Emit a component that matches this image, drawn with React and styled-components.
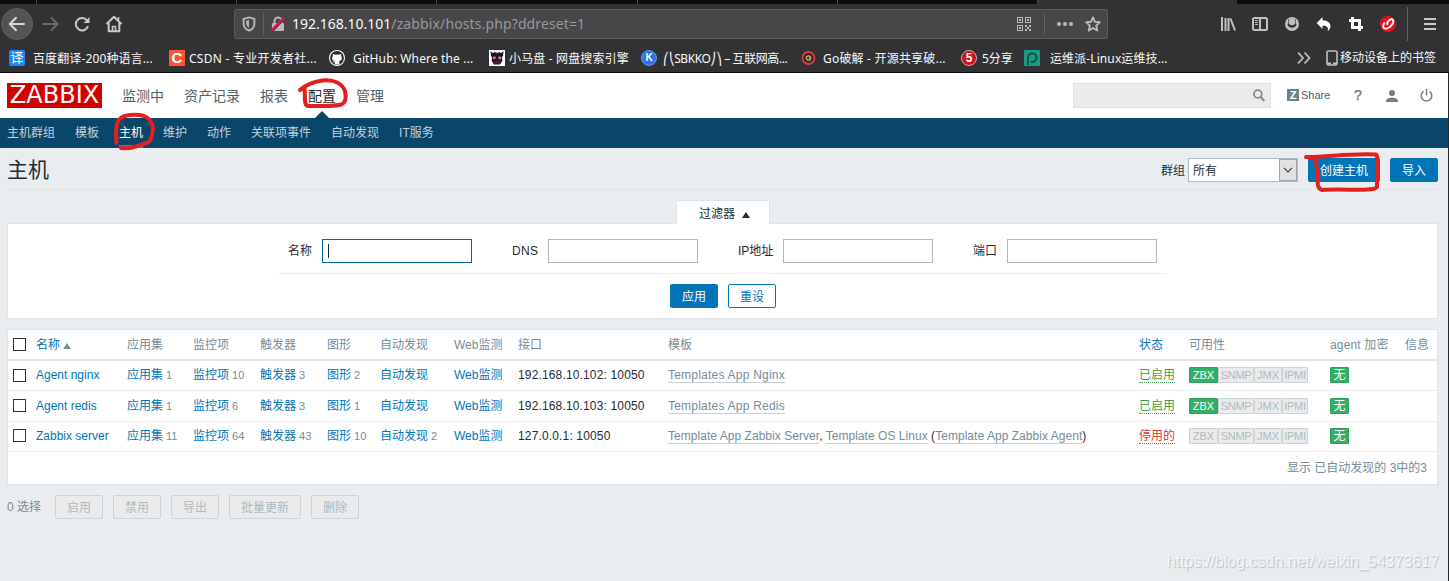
import React from 'react'
import styled, { createGlobalStyle } from 'styled-components';

const GlobalStyle = createGlobalStyle`
  * {
    box-sizing: border-box;
  }

  body {
    margin: 0;
    background: #e9edf0;
    overflow: hidden;
  }
`;

const bookmarks = [
  { icon: 'fanyi', text: '百度翻译-200种语言...', width: 160, gap: 8, ls: 0.12 },
  { icon: 'csdn', text: 'CSDN - 专业开发者社...', width: 160, gap: 4, ls: 0.26 },
  { icon: 'github', text: 'GitHub: Where the ...', width: 160, gap: 8, ls: 0.14 },
  { icon: 'horse', text: '小马盘 - 网盘搜索引擎', width: 152, gap: 4, ls: 0.15 },
  { icon: 'k', text: '⎛⎝SBKKO⎠⎞ – 互联网高...', width: 160, gap: 6, ls: -0.42 },
  { icon: 'go', text: 'Go破解 - 开源共享破...', width: 160, gap: 7, ls: 0.2 },
  { icon: 'five', text: '5分享', width: 63, gap: 5 },
  { icon: 'yunwei', text: '运维派-Linux运维技...', width: 150, gap: 10, ls: 0.1 },
];

const hosts = [
  {
    name: 'Agent nginx', apps: 1, items: 10, triggers: 3, graphs: 2,
    ip: '192.168.10.102: 10050', enabled: true, ls: 0.22,
    template: <Tpl>Templates App Nginx</Tpl>,
  },
  {
    name: 'Agent redis', apps: 1, items: 6, triggers: 3, graphs: 1,
    ip: '192.168.10.103: 10050', enabled: true, ls: 0.22,
    template: <Tpl>Templates App Redis</Tpl>,
  },
  {
    name: 'Zabbix server', apps: 11, items: 64, triggers: 43, graphs: 10, discovery: 2,
    ip: '127.0.0.1: 10050', enabled: false, ls: 0.04,
    template: (
      <>
        <Tpl>Template App Zabbix Server</Tpl>, <Tpl>Template OS Linux</Tpl> (<Tpl>Template App Zabbix Agent</Tpl>)
      </>
    ),
  },
];

function Tpl({ children }) {
  return <TemplateLink>{children}</TemplateLink>
}

const BookmarkIcon = ({ name }) => {
  switch (name) {
    case 'fanyi':
      return <Favicon $bg="#1e88f5" $size="13px" $radius="2px">译</Favicon>
    case 'csdn':
      return <Favicon $bg="#fc5531" $size="15px" $bold>C</Favicon>
    case 'github':
      return (
        <svg width="16" height="16" viewBox="0 0 16 16">
          <circle cx="8" cy="8" r="8" fill="#fff" />
          <circle cx="8" cy="8" r="6.9" fill="#24292e" />
          <path fill="#fff" d="M5.9 14.6v-2.2c-1.5.3-2-.6-2.3-1.2l-.4-.4c1-.1 1.2.9 2 .9.4 0 .7-.1.9-.6-2-.3-3-1.300-3-3.200 0-.8.3-1.500.8-2-.2-.6-.2-1.300.1-2 .8 0 1.500.4 2 .8a7 7 0 0 1 4 0c.5-.4 1.200-.8 2-.8.3.7.300 1.400.1 2 .5.5.8 1.200.8 2 0 1.900-1.100 2.900-3 3.200.3.3.5.8.5 1.500v2z" />
        </svg>
      )
    case 'horse':
      return (
        <svg width="16" height="16" viewBox="0 0 16 16">
          <rect width="16" height="16" fill="#fff" />
          <path fill="#22131f" d="M1.500 1l2.500 2.200L5.500 2l2.500 1 2.500-1L12 3.200 14.500 1l-.5 5-1 1 .3 4-2.300 3.500H5L2.700 11 3 7 2 6z" />
          <circle cx="5.300" cy="7.700" r="1.500" fill="#a78fa5" />
          <circle cx="10.700" cy="7.700" r="1.500" fill="#a78fa5" />
          <path fill="#5a1247" d="M5 10.500h6v3H5z" />
        </svg>
      )
    case 'k':
      return <Favicon $bg="#2e74e6" $size="10px" $radius="50%" $ring="#5d97f2" $bold>K</Favicon>
    case 'go':
      return (
        <svg width="15" height="16" viewBox="0 0 15 16">
          <circle cx="7.500" cy="8" r="6" fill="#2c2528" stroke="#e03a4a" strokeWidth="1.800" />
          <circle cx="7.500" cy="8" r="2.200" fill="none" stroke="#d2b84c" strokeWidth="1.300" />
          <path d="M7.500 8h2" stroke="#d2b84c" />
        </svg>
      )
    case 'five':
      return <Favicon $bg="#c81414" $size="12px" $radius="50%" $ring="#e8a0a0" $bold>5</Favicon>
    default:
      return (
        <svg width="16" height="16" viewBox="0 0 16 16">
          <rect width="16" height="16" rx="1" fill="#159f82" />
          <path d="M4 15V7.500a4.300 4.300 0 1 1 4.300 4.300H7" fill="none" stroke="#28433f" strokeWidth="1.900" />
        </svg>
      )
  }
}

const BrowserBar = () => {
  return (
    <Browser>
      <TabStrip>
        <TabEdge $w={37} />
        <TabEdge $w={200} />
        <TabEdge $w={200} />
        <TabEdge $w={201} />
        <TabEdge $w={200} />
        <TabEdge $w={200} />
        <ActiveTab />
      </TabStrip>
      <NavRow>
        <BackButton>
          <svg width="18" height="18" viewBox="0 0 18 18" fill="none" stroke="#d7d7db" strokeWidth="2.100" strokeLinecap="round" strokeLinejoin="round">
            <path d="M16 9H2M8 2.800L1.800 9 8 15.200" />
          </svg>
        </BackButton>
        <NavIcons>
          <svg width="18" height="16" viewBox="0 0 18 16" fill="none" stroke="#6b6b6e" strokeWidth="2" strokeLinecap="round" strokeLinejoin="round">
            <path d="M2 8h14M10.500 2l6 6-6 6" />
          </svg>
          <svg width="16" height="16" viewBox="0 0 16 16" fill="none" stroke="#c9c9cc" strokeWidth="2">
            <path d="M13 4.500A6.200 6.200 0 1 0 14 10" />
            <path d="M15.500 1v6h-6z" fill="#c9c9cc" stroke="none" />
          </svg>
          <svg width="18" height="18" viewBox="0 0 18 18" fill="none" stroke="#c9c9cc" strokeWidth="2" strokeLinejoin="round">
            <path d="M1.500 9L9 1.800 16.500 9M3.700 8v8.200h10.600V8" />
            <path d="M7.500 16v-4.500h3V16M13.500 2v3" strokeWidth="1.600" />
          </svg>
        </NavIcons>
        <UrlBar>
          <svg width="14" height="16" viewBox="0 0 14 16" fill="none" stroke="#b9b9bc">
            <path d="M7 1.400l5.400 1.500v4.600c0 3.500-2.200 6-5.400 7-3.200-1-5.400-3.500-5.400-7V2.900z" strokeWidth="1.900" />
            <path d="M7 4v7.800C5 10.600 4.300 9 4.300 7.500V4.700z" fill="#b9b9bc" stroke="none" />
          </svg>
          <Divider $h={22} $ml={7} />
          <LockIcon width="16" height="16" viewBox="0 0 16 16">
            <rect x="2" y="7" width="12" height="8" rx="1" fill="#b9b9bc" />
            <path d="M4.500 7V5a3.500 3.500 0 0 1 7 0v2" fill="none" stroke="#b9b9bc" strokeWidth="2" />
            <path d="M2.200 15.500L15 2" stroke="#47474a" strokeWidth="2" />
            <path d="M1.200 14.500L14 1.500" stroke="#e8114f" strokeWidth="2.200" />
          </LockIcon>
          <Address><b>192.168.10.101</b>/zabbix/hosts.php?ddreset=1</Address>
          <svg width="14" height="14" viewBox="0 0 14 14" fill="#b9b9bc">
            <path fillRule="evenodd" d="M0 0h6v6H0zM1 1v4h4V1zM8 0h6v6H8zM9 1v4h4V1zM0 8h6v6H0zM1 9v4h4V9z" />
            <path d="M2 2h2v2H2zM10 2h2v2h-2zM2 10h2v2H2zM8 8h2v2H8zM10 10h2v2h-2zM12 8h2v2h-2zM8 12h2v2H8zM12 12h2v2h-2z" />
          </svg>
          <Divider $h={22} $ml={13} />
          <Dots width="16" height="4" viewBox="0 0 16 4" fill="#b9b9bc">
            <circle cx="2" cy="2" r="2" />
            <circle cx="8" cy="2" r="2" />
            <circle cx="14" cy="2" r="2" />
          </Dots>
          <svg width="16" height="16" viewBox="0 0 16 16" fill="none" stroke="#b9b9bc" strokeWidth="1.900" strokeLinejoin="round">
            <path d="M8 1.300l2 4.500 4.800.5-3.600 3.300 1 4.900L8 12l-4.200 2.500 1-4.900L1.200 6.300 6 5.800z" />
          </svg>
        </UrlBar>
        <Tools>
          <svg width="16" height="16" viewBox="0 0 16 16" fill="none" stroke="#c0c0c3" strokeWidth="2">
            <path d="M2 1v14M5.500 2v13M8.500 2v13M10.500 2.500L15 14.500" />
          </svg>
          <svg width="16" height="16" viewBox="0 0 16 16" fill="none" stroke="#c0c0c3" strokeWidth="2">
            <rect x="1" y="2" width="14" height="12" rx="1.500" />
            <path d="M8 2v12" />
            <path d="M3 4.500h3M3 6.500h3M3 8.500h3" strokeWidth="1" />
          </svg>
          <svg width="16" height="16" viewBox="0 0 16 16">
            <circle cx="8" cy="8" r="7" fill="#c0c0c3" />
            <path d="M4.300 3.500h7.400v4.300c0 .4.500.6 1 .7-.6 1.800-2.300 3.300-4.700 3.300S3.900 10.300 3.300 8.500c.5-.1 1-.3 1-.7z" fill="#323234" />
            <circle cx="8" cy="6" r="3.200" fill="#c0c0c3" />
          </svg>
          <svg width="16" height="16" viewBox="0 0 16 16" fill="#fff">
            <path d="M6.500 1v3.200c5.500.2 8 2.800 8 6 0 1.800-.7 3.400-2.700 4.900.8-4.100-1-5.400-5.300-5.300v3.200L.7 6.900z" />
          </svg>
          <svg width="16" height="16" viewBox="0 0 16 16" fill="none" stroke="#fff" strokeWidth="3">
            <path d="M1 4.500h10.500V15M4.500 1v10.500H15" />
          </svg>
          <svg width="16" height="16" viewBox="0 0 16 16">
            <circle cx="8" cy="8" r="8" fill="#e60f1e" />
            <path d="M7.200 8.200C6.800 5.200 11.200 2 12.900 3.800C14.600 6 10.500 12 6.500 12.600C3 13 2.300 10 4.300 7" fill="none" stroke="#fff" strokeWidth="1.900" strokeLinecap="round" />
          </svg>
          <Divider $h={34} $ml={-5} />
          <svg width="12" height="14" viewBox="0 0 12 14" stroke="#c9c9cc" strokeWidth="2">
            <path d="M0 2h12M0 7h12M0 12h12" />
          </svg>
        </Tools>
      </NavRow>
      <BookmarkRow>
        {bookmarks.map((b) => (
          <Bookmark key={b.icon} $w={b.width} $gap={b.gap} $ls={b.ls}>
            <BookmarkIcon name={b.icon} />
            <span>{b.text}</span>
          </Bookmark>
        ))}
        <MobileBookmarks>
          <svg width="14" height="14" viewBox="0 0 14 14" fill="none" stroke="#c0c0c3" strokeWidth="1.800">
            <path d="M1 1.500L6 7l-5 5.500M7.500 1.500l5 5.500-5 5.500" />
          </svg>
          <PhoneIcon width="12" height="16" viewBox="0 0 12 16">
            <rect x="1" y="1" width="10" height="14" rx="1.500" fill="none" stroke="#c0c0c3" strokeWidth="1.600" />
            <path d="M1 13.500h4M7 13.500h4" stroke="#c0c0c3" strokeWidth="2" />
          </PhoneIcon>
          <span>移动设备上的书签</span>
        </MobileBookmarks>
      </BookmarkRow>
    </Browser>
  )
}

const Header = () => {
  return (
    <header>
      <TopNav>
        <Logo>ZABBIX</Logo>
        <TopLink>监测中</TopLink>
        <TopLink>资产记录</TopLink>
        <TopLink>报表</TopLink>
        <TopLink $active>配置</TopLink>
        <TopLink>管理</TopLink>
        <Search>
          <svg width="12" height="13" viewBox="0 0 12 13" fill="none" stroke="#768d99" strokeWidth="1.700">
            <circle cx="4.800" cy="5" r="3.900" />
            <path d="M7.600 8l3.800 4" strokeWidth="2" />
          </svg>
        </Search>
        <Share><i>Z</i>Share</Share>
        <Help>?</Help>
        <svg width="12" height="12" viewBox="0 0 12 12" fill="#6b838f">
          <circle cx="6" cy="3" r="3" />
          <path d="M0 12V10.500C1 8.500 3 7.600 6 7.600s5 .9 6 2.900V12z" />
        </svg>
        <PowerIcon width="13" height="13" viewBox="0 0 13 13" fill="none" stroke="#6b838f" strokeWidth="1.500">
          <path d="M3.500 2.300a5.300 5.300 0 1 0 6 0M6.500 0v6.500" />
        </PowerIcon>
      </TopNav>
      <SubNav>
        <SubLink>主机群组</SubLink>
        <SubLink>模板</SubLink>
        <SubLink $active>主机</SubLink>
        <SubLink>维护</SubLink>
        <SubLink>动作</SubLink>
        <SubLink>关联项事件</SubLink>
        <SubLink>自动发现</SubLink>
        <SubLink>IT服务</SubLink>
      </SubNav>
    </header>
  )
}

const Filter = () => {
  return (
    <>
      <FilterTab>过滤器 <Arrow $mt={5} $color="#1f2c33" $ml={7} /></FilterTab>
      <FilterBox>
        <FilterFields>
          <Label $w={24}>名称</Label>
          <Field $focus><Caret /></Field>
          <Label $w={26} $ls={0.3}>DNS</Label>
          <Field />
          <Label $w={35}>IP地址</Label>
          <Field />
          <Label $w={24}>端口</Label>
          <Field />
        </FilterFields>
        <FilterButtons>
          <Button>应用</Button>
          <Button $alt>重设</Button>
        </FilterButtons>
      </FilterBox>
    </>
  )
}

const HostRow = ({ host, index }) => {
  return (
    <Row $tall={index === 1}>
      <Check $mt={index === 0 ? 2 : 1} />
      <Cell><a>{host.name}</a></Cell>
      <Cell><a>应用集</a><sup>{host.apps}</sup></Cell>
      <Cell><a>监控项</a><sup>{host.items}</sup></Cell>
      <Cell><a>触发器</a><sup>{host.triggers}</sup></Cell>
      <Cell><a>图形</a><sup>{host.graphs}</sup></Cell>
      <Cell><a>自动发现</a>{host.discovery && <sup>{host.discovery}</sup>}</Cell>
      <Cell><a>Web监测</a></Cell>
      <Cell $ls={0.15}>{host.ip}</Cell>
      <Cell $ls={host.ls}><span>{host.template}</span></Cell>
      <Cell><Status $on={host.enabled}>{host.enabled ? '已启用' : '停用的'}</Status></Cell>
      <Cell>
        <Badge $w={29} $on={host.enabled}>ZBX</Badge>
        <Badge $w={36} $ls={-0.3}>SNMP</Badge>
        <Badge $w={28}>JMX</Badge>
        <Badge $w={26} $ls={-0.3}>IPMI</Badge>
      </Cell>
      <Cell><Badge $w={19} $on $cjk>无</Badge></Cell>
    </Row>
  )
}

const App = () => {
  return (
    <Screen>
      <GlobalStyle />
      <BrowserBar />
      <Page>
        <Header />
        <Main>
          <TitleRow>
            <h1>主机</h1>
            <span>群组</span>
            <Select>
              所有
              <i>
                <svg width="10" height="6" viewBox="0 0 10 6" fill="none" stroke="#444" strokeWidth="1.200">
                  <path d="M1 .8l4 4 4-4" />
                </svg>
              </i>
            </Select>
            <Button>创建主机</Button>
            <Button>导入</Button>
          </TitleRow>
          <Filter />
          <Table>
            <HeadRow>
              <Check $mt={1} />
              <Cell><a>名称</a><Arrow $mt={2} $color="#768d99" $ml={3} /></Cell>
              <Cell>应用集</Cell>
              <Cell>监控项</Cell>
              <Cell>触发器</Cell>
              <Cell>图形</Cell>
              <Cell>自动发现</Cell>
              <Cell>Web监测</Cell>
              <Cell>接口</Cell>
              <Cell>模板</Cell>
              <Cell><a>状态</a></Cell>
              <Cell>可用性</Cell>
              <Cell $ls={0.15}>agent 加密</Cell>
              <Cell>信息</Cell>
            </HeadRow>
            {hosts.map((h, i) => (
              <HostRow key={h.name} host={h} index={i} />
            ))}
            <TableFooter>显示 已自动发现的 3中的3</TableFooter>
          </Table>
          <Actions>
            <span>0 选择</span>
            <Button $disabled>启用</Button>
            <Button $disabled>禁用</Button>
            <Button $disabled>导出</Button>
            <Button $disabled>批量更新</Button>
            <Button $disabled>删除</Button>
          </Actions>
        </Main>
      </Page>
      {/* hand drawn marker strokes */}
      <Marks width="1449" height="581" viewBox="0 0 1449 581">
        <path d="M300 90C304 86.500 312 82 322 80.500C333 79.500 342 83 345 91C346.500 98 345 103 341.500 104.500C332 107 318 105.500 308 106C303.500 105 305.500 97 304.500 88" />
        <path d="M116.500 143C115.500 133 115.500 125 119 119.500C123 114.500 136 113.500 144 116C152 119 154 127 152 135C150 144 147 142.500 140 145C133 148 127 149 121 148" />
        <path d="M1306 157C1325 157.500 1350 153 1376 154.500C1379.500 158 1377 172 1377 187C1374 192 1345 188.500 1322 190C1316 188 1318 180 1317.500 172C1317 166 1315 162 1315 158.500" />
      </Marks>
      <Watermark>https://blog.csdn.net/weixin_54373617</Watermark>
    </Screen>
  )
}

const Screen = styled.div`
  position: relative;
  width: 1449px;
  height: 581px;
  overflow: hidden;
  background: #26292c;
  font-family: "Liberation Sans", "Noto Sans CJK SC", sans-serif;
  font-size: 12px;
  color: #1f2c33;
`;

const Browser = styled.div`
  height: 73px;
  background: #323234;
  border-bottom: 1px solid #0c0c0d;
  font-family: "Noto Sans", "Noto Sans CJK SC", sans-serif;
  color: #f9f9fa;

  svg {
    flex: none;
  }
`;

const TabStrip = styled.div`
  display: flex;
  height: 4px;
  background: #0c0c0d;
`;

const TabEdge = styled.div`
  width: ${(p) => p.$w}px;
  border-right: 1px solid #4a4a4d;
`;

const ActiveTab = styled.div`
  width: 199px;
  background: #323234;
`;

const NavRow = styled.div`
  display: flex;
  align-items: center;
  height: 40px;
  padding-left: 1px;
`;

const BackButton = styled.div`
  width: 32px;
  height: 32px;
  display: flex;
  align-items: center;
  justify-content: center;
  border-radius: 50%;
  background: #535355;
  border: 1px solid #5f5f61;
`;

const NavIcons = styled.div`
  display: flex;
  align-items: center;
  gap: 15px;
  width: 201px;
  padding-left: 8px;
`;

const UrlBar = styled.div`
  width: 874px;
  height: 30px;
  display: flex;
  align-items: center;
  padding: 0 6px 0 7px;
  background: #474749;
  border: 1px solid #5b5b5e;
  border-radius: 2px;
`;

const Divider = styled.div`
  width: 1px;
  height: ${(p) => p.$h}px;
  margin-left: ${(p) => p.$ml}px;
  background: #646468;
`;

const LockIcon = styled.svg`
  margin-left: 6px;
`;

const Address = styled.div`
  flex: 1;
  padding-left: 6px;
  font-size: 14px;
  line-height: 20px;
  letter-spacing: 0.12px;
  color: #98989a;

  b {
    font-weight: normal;
    letter-spacing: 0;
    color: #f9f9fa;
  }
`;

const Dots = styled.svg`
  margin: 0 12px;
`;

const Tools = styled.div`
  display: flex;
  align-items: center;
  gap: 16px;
  margin-left: 112px;
`;

const BookmarkRow = styled.div`
  display: flex;
  align-items: center;
  height: 28px;
  padding-left: 9px;
  font-size: 12px;
`;

const Bookmark = styled.div`
  width: ${(p) => p.$w}px;
  flex: none;
  display: flex;
  align-items: center;
  gap: ${(p) => p.$gap}px;
  letter-spacing: ${(p) => p.$ls || 0}px;
  line-height: 18px;
  white-space: nowrap;

  span {
    padding-top: 1px;
  }
`;

const Favicon = styled.i`
  width: 16px;
  height: 16px;
  flex: none;
  display: flex;
  align-items: center;
  justify-content: center;
  background: ${(p) => p.$bg};
  border: ${(p) => (p.$ring ? `1px solid ${p.$ring}` : 'none')};
  border-radius: ${(p) => p.$radius || 0};
  font-family: "Liberation Sans", "Noto Sans CJK SC", sans-serif;
  font-size: ${(p) => p.$size};
  font-weight: ${(p) => (p.$bold ? 'bold' : 'normal')};
  font-style: normal;
  letter-spacing: 0;
  line-height: 14px;
  color: #fff;
`;

const MobileBookmarks = styled.div`
  display: flex;
  align-items: center;
  margin-left: 123px;
  line-height: 18px;
  white-space: nowrap;
`;

const PhoneIcon = styled.svg`
  margin: 0 2px 0 15px;
`;

const Page = styled.div`
  width: 1448px;
  height: 508px;
  background: #e9edf0;
`;

const TopNav = styled.div`
  display: flex;
  align-items: center;
  height: 45px;
  padding: 0 16px 0 7px;
  background: #fff;
`;

const Logo = styled.div`
  width: 95px;
  height: 25px;
  background: #d40000;
  color: #fff;
  font-family: "DejaVu Sans", sans-serif;
  font-size: 24px;
  line-height: 25px;
  text-align: center;
`;

const TopLink = styled.a`
  position: relative;
  margin-left: 20px;
  font-size: 14px;
  line-height: 46px;
  color: ${(p) => (p.$active ? '#1f2c33' : '#51616a')};

  &::after {
    content: "";
    display: ${(p) => (p.$active ? 'block' : 'none')};
    position: absolute;
    left: 6px;
    bottom: 0;
    border: 8px solid transparent;
    border-top: 0;
    border-bottom-color: #0a466a;
  }
`;

const Search = styled.div`
  width: 198px;
  height: 25px;
  display: flex;
  align-items: center;
  justify-content: flex-end;
  margin-left: auto;
  padding-right: 5px;
  background: #ebebeb;
  border: 1px solid #dfe0e0;
`;

const Share = styled.div`
  display: flex;
  align-items: center;
  margin-left: 16px;
  width: 67px;
  height: 14px;
  margin-bottom: 1px;
  font-size: 11px;
  color: #51616a;

  i {
    width: 12px;
    height: 12px;
    margin-right: 2px;
    background: #6b838f;
    color: #fff;
    font-weight: bold;
    font-style: normal;
    line-height: 12px;
    text-align: center;
  }
`;

const Help = styled.div`
  width: 32px;
  margin-bottom: 2px;
  font-size: 14px;
  -webkit-text-stroke: 0.4px #6b838f;
  color: #6b838f;
`;

const PowerIcon = styled.svg`
  margin-left: 22px;
  margin-right: -1px;
`;

const SubNav = styled.div`
  display: flex;
  gap: 20px;
  height: 30px;
  padding-left: 7px;
  background: #0a466a;
`;

const SubLink = styled.a`
  height: 30px;
  line-height: 30px;
  color: ${(p) => (p.$active ? '#fff' : '#c2d1da')};
  border-bottom: ${(p) => (p.$active ? '3px solid #3d83ad' : 'none')};
`;

const Main = styled.main`
  padding: 0 10px 0 7px;
`;

const TitleRow = styled.div`
  display: flex;
  align-items: center;
  gap: 10px;
  height: 42px;
  border-bottom: 1px solid #dfe4e7;

  h1 {
    flex: 1;
    margin: 0;
    padding-top: 2px;
    font-size: 21px;
    font-weight: normal;
    line-height: 40px;
  }

  span {
    margin-right: -7px;
  }

  & > * {
    margin-top: 2px;
  }
`;

const Select = styled.div`
  width: 110px;
  height: 24px;
  display: flex;
  align-items: center;
  justify-content: space-between;
  padding-left: 4px;
  background: #fff;
  border: 1px solid #acbbc2;

  i {
    width: 18px;
    height: 22px;
    display: flex;
    align-items: center;
    justify-content: center;
    background: #e1e1e1;
    border: 1px solid #a6a6a6;
  }
`;

const Button = styled.button`
  height: 24px;
  padding: 2px 11px 0;
  font-family: inherit;
  font-size: 12px;
  line-height: 20px;
  border-radius: 2px;
  border: 1px solid ${(p) => (p.$disabled ? '#ccd5d9' : '#0275b8')};
  background: ${(p) => (p.$disabled ? '#ebebeb' : p.$alt ? '#fff' : '#0275b8')};
  color: ${(p) => (p.$disabled ? '#acbbc2' : p.$alt ? '#0275b8' : '#fff')};
`;

const FilterTab = styled.div`
  position: relative;
  z-index: 1;
  width: 94px;
  height: 24px;
  display: flex;
  align-items: center;
  margin: 10px 0 -1px 669px;
  padding-left: 22px;
  background: #fff;
  border: 1px solid #dfe4e7;
  border-bottom: 0;
  border-radius: 2px 2px 0 0;
`;

const Arrow = styled.i`
  margin: ${(p) => p.$mt}px 0 0 ${(p) => p.$ml}px;
  border: 4px solid transparent;
  border-top: 0;
  border-bottom: 6px solid ${(p) => p.$color};
`;

const FilterBox = styled.div`
  height: 96px;
  background: #fff;
  border: 1px solid #dfe4e7;
`;

const FilterFields = styled.div`
  display: flex;
  width: 889px;
  height: 50px;
  margin-left: 270px;
  padding: 15px 10px 0;
  border-bottom: 1px solid #ebeef0;
`;

const Label = styled.label`
  width: ${(p) => p.$w}px;
  flex: none;
  margin-right: 10px;
  letter-spacing: ${(p) => p.$ls || 0}px;
  line-height: 24px;
  white-space: nowrap;
`;

const Field = styled.div`
  width: 150px;
  height: 24px;
  flex: none;
  margin-right: 40px;
  padding: 4px 5px;
  background: #fff;
  border: 1px solid ${(p) => (p.$focus ? '#00669e' : '#acbbc2')};

  &:last-child {
    margin-right: 0;
  }
`;

const Caret = styled.div`
  width: 1px;
  height: 14px;
  background: #1f2c33;
`;

const FilterButtons = styled.div`
  display: flex;
  justify-content: center;
  gap: 10px;
  padding: 10px 0 0 1px;
`;

const Table = styled.div`
  height: 156px;
  margin-top: 10px;
  background: #fff;
  border: 1px solid #dfe4e7;
`;

const Row = styled.div`
  display: grid;
  grid-template-columns: 28px 91px 66px 67px 67px 53px 74px 64px 150px 471px 50px 141px 75px 1fr;
  align-items: start;
  height: ${(p) => (p.$tall ? 31 : 30)}px;
  padding-top: ${(p) => (p.$tall ? 7 : 6)}px;
  border-bottom: 1px solid #ebeef0;
`;

const HeadRow = styled(Row)`
  height: 31px;
  padding-top: 7px;
  border-bottom: 2px solid #dfe4e7;
  color: #768d99;
`;

const Cell = styled.div`
  display: flex;
  align-items: center;
  height: 16px;
  letter-spacing: ${(p) => p.$ls || 0}px;
  line-height: 16px;
  white-space: nowrap;

  a {
    color: #0275b8;
  }

  sup {
    margin-left: 3px;
    font-size: 11px;
    line-height: 16px;
    color: #768d99;
  }
`;

const Check = styled.div`
  width: 13px;
  height: 13px;
  margin: ${(p) => p.$mt}px 0 0 5px;
  background: #fff;
  border: 1px solid #333;
`;

const TemplateLink = styled.a`
  && {
    color: #768d99;
    border-bottom: 1px solid #c5d0d5;
  }
`;

const Status = styled.span`
  height: 16px;
  line-height: 17px;
  color: ${(p) => (p.$on ? '#429e47' : '#e33734')};
  border-bottom: 1px dotted currentColor;
`;

const Badge = styled.span`
  width: ${(p) => p.$w}px;
  height: 16px;
  font-size: ${(p) => (p.$cjk ? 12 : 11)}px;
  line-height: ${(p) => (p.$cjk ? 15 : 14)}px;
  letter-spacing: ${(p) => p.$ls || 0}px;
  text-align: center;
  border: 1px solid ${(p) => (p.$on ? '#2f9f5e' : '#ccd5d9')};
  background: ${(p) => (p.$on ? '#34af67' : '#ebebeb')};
  color: ${(p) => (p.$on ? '#fff' : '#acbbc2')};
  border-radius: 1px;
`;

const TableFooter = styled.div`
  padding-right: 10px;
  line-height: 33px;
  text-align: right;
  color: #768d99;
`;

const Actions = styled.div`
  display: flex;
  align-items: center;
  gap: 10px;
  margin-top: 10px;
  color: #768d99;

  span {
    width: 38px;
    line-height: 24px;
  }
`;

const Marks = styled.svg`
  position: absolute;
  left: 0;
  top: 0;
  fill: none;
  stroke: #e61e1e;
  stroke-width: 4;
  stroke-linecap: round;
  stroke-linejoin: round;
`;

const Watermark = styled.div`
  position: absolute;
  right: 10px;
  bottom: 9px;
  font-size: 16px;
  line-height: 20px;
  color: rgba(255, 255, 255, 0.75);
  text-shadow: 1px 1px 1px rgba(120, 130, 140, 0.45);
`;

export default App
